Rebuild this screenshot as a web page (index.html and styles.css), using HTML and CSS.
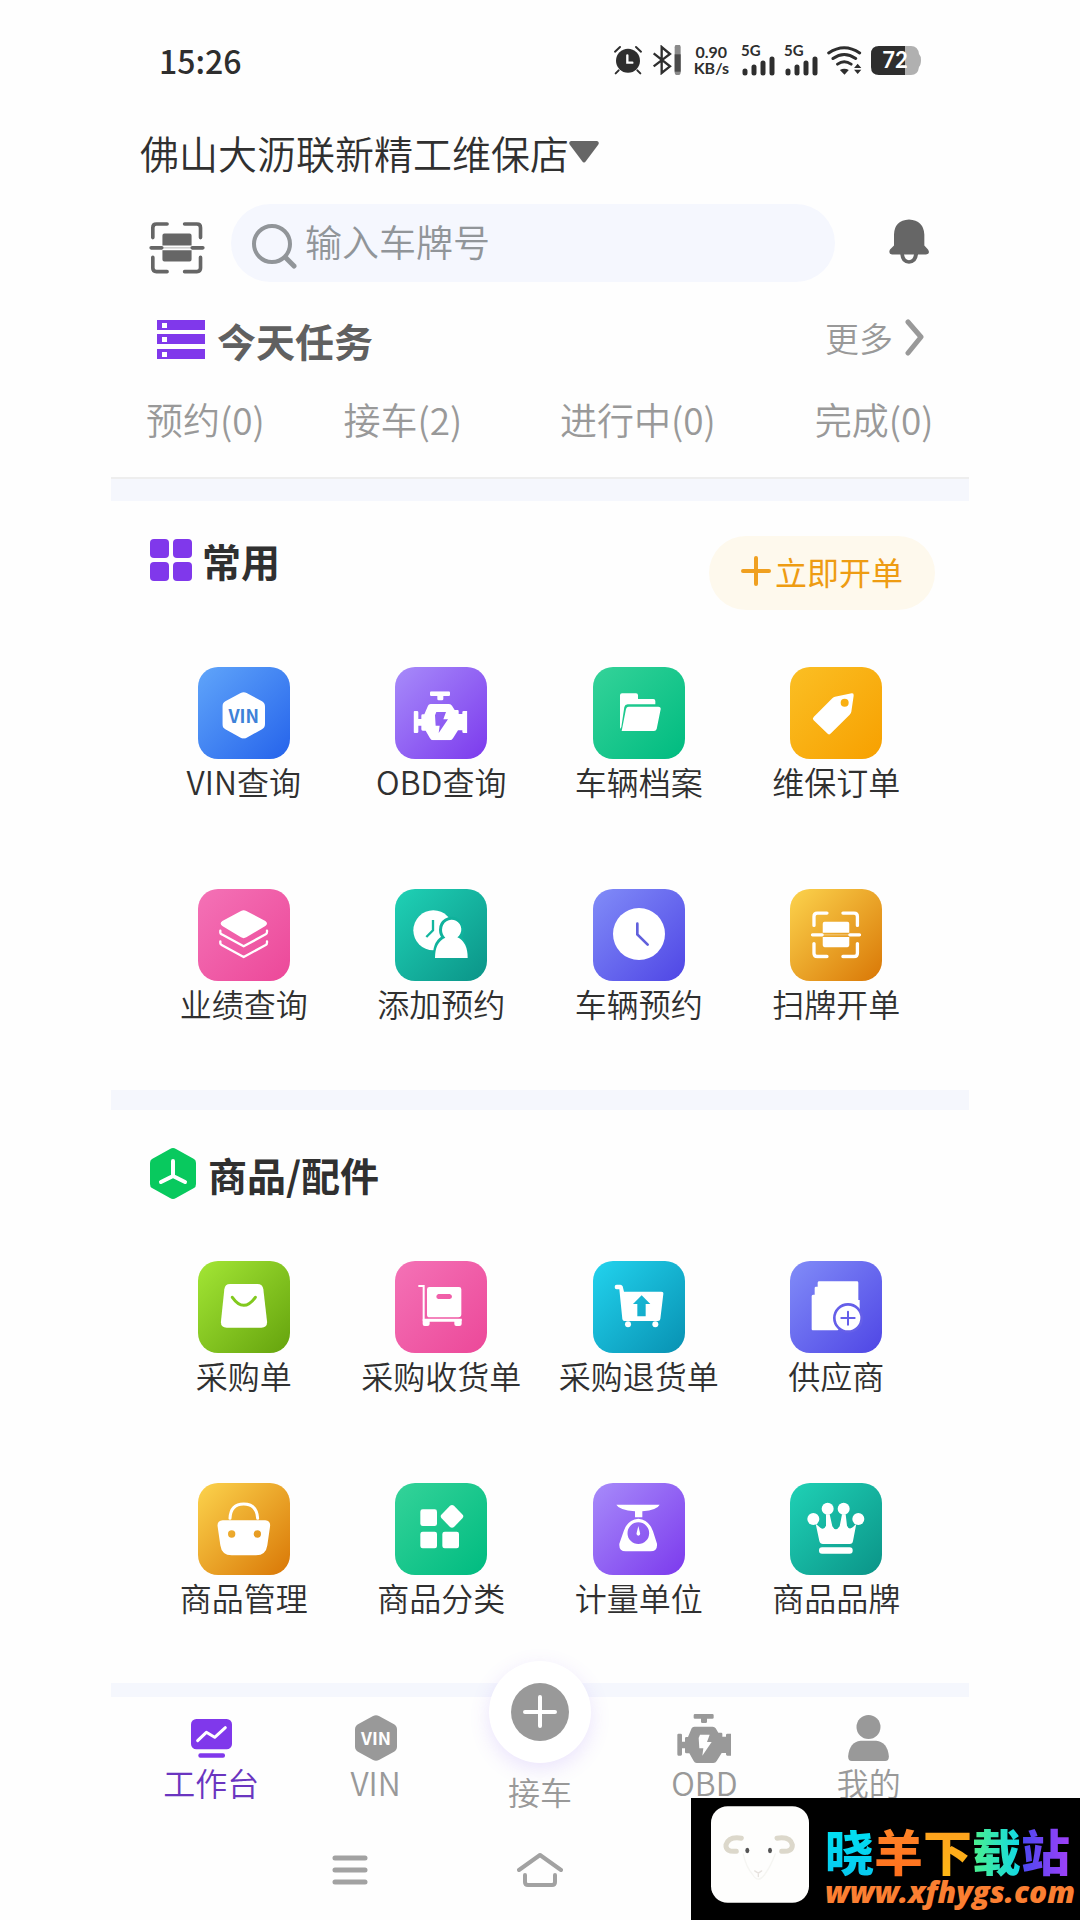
FILE: index.html
```html
<!DOCTYPE html>
<html lang="zh-CN">
<head>
<meta charset="utf-8">
<meta name="viewport" content="width=device-width, initial-scale=1">
<title>工作台</title>
<link rel="stylesheet" href="styles.css">
</head>
<body>
<svg class="defs" aria-hidden="true">
  <symbol id="scan" viewBox="0 0 168 160">
    <g fill="none" stroke="currentColor" stroke-width="11" stroke-linecap="round">
      <path d="M11 50V20Q11 9 22 9H54M107 9H144Q155 9 155 20V50M11 110V142Q11 153 22 153H54M107 153H144Q155 153 155 142V110M6 81H38M130 81H162"/>
    </g>
    <path fill="currentColor" d="M46 38H122Q128 38 128 44V74H40V44Q40 38 46 38ZM40 88H128V116Q128 122 122 122H46Q40 122 40 116Z"/>
    <path d="M38 81H130" stroke="currentColor" stroke-width="4" opacity=".35"/>
  </symbol>
  <symbol id="engine" viewBox="732 123 162 147">
    <path fill="currentColor" fill-rule="evenodd" d="M786 123H838Q842 123 842 127V134Q842 137 838 137H822V146Q822 150 818 150H808Q804 150 804 146V137H786Q782 137 782 134V127Q782 123 786 123ZM736 182H743Q747 182 747 186V206H756V196Q756 192 760 192H765L776 166Q778 161 784 161H839Q845 161 848 166L856 179H865Q868 179 868 183V191H879V186Q879 182 883 182H894V248H883Q879 248 879 244V240H866L851 264Q848 270 841 270H791Q785 270 782 264L769 241H760Q756 241 756 237V226H747V244Q747 248 743 248H736Q733 248 733 244V186Q733 182 736 182ZM801 185H830L822 207H836L808 248L811 226H799L797 195Z"/>
  </symbol>
  <symbol id="hex" viewBox="0 0 128 140">
    <path fill="currentColor" d="M55 3Q64 -2 73 3L119 28Q128 33 128 44V96Q128 107 119 112L73 137Q64 142 55 137L9 112Q0 107 0 96V44Q0 33 9 28Z"/>
  </symbol>
</svg>

<div class="app">
  <header class="status">
    <time class="status-time">15:26</time>
    <div class="status-icons">
      <svg width="30" height="30" viewBox="76 46 84 90" fill="none" stroke="#2e2e2e" stroke-width="6" stroke-linecap="round"><circle cx="118" cy="93" r="36" fill="#2e2e2e" stroke="none"/><path d="M79 66L94 52M157 66L142 52M90 122L81 131M146 122L155 131"/><path d="M116 77V99H131" stroke="#fff" stroke-width="7"/></svg>
      <svg width="30" height="30" viewBox="186 46 88 90" fill="none" stroke="#2e2e2e" stroke-width="7"><path d="M190 71L239 110L214 130V52L239 73L190 110"/><path d="M262 53V128" stroke="#8a8a8a" stroke-width="18" stroke-linecap="round"/><path d="M262 74V126" stroke="#4a4a4a" stroke-width="18"/></svg>
      <div class="speed"><span>0.90</span><span>KB/s</span></div>
      <div class="signal"><span>5G</span><svg width="34" height="20" viewBox="0 0 34 20" stroke="#2e2e2e" stroke-width="5" stroke-linecap="round"><path d="M4 15V17M13 11V17M22 7V17M31 3V17"/></svg></div>
      <div class="signal"><span>5G</span><svg width="34" height="20" viewBox="0 0 34 20" stroke="#2e2e2e" stroke-width="5" stroke-linecap="round"><path d="M4 15V17M13 11V17M22 7V17M31 3V17"/></svg></div>
      <svg width="35" height="29" viewBox="713 48 106 88" fill="none" stroke="#2e2e2e" stroke-width="9" stroke-linecap="round"><path d="M718 69Q765 37 812 69M731 86Q765 62 800 86M745 103Q765 89 786 103"/><path fill="#2e2e2e" stroke="none" d="M752 121Q765 113 779 121L766 135ZM795 115L806 102L817 115ZM795 120H817L806 133Z"/></svg>
      <svg class="battery" width="50" height="29" viewBox="0 0 50 29"><path fill="#b0b0b0" d="M7 0H40Q47 0 48 8Q50 10 50 14Q50 19 48 21Q47 29 40 29H7Z"/><path fill="#2e2e2e" d="M8 0H34V29H8Q0 29 0 21V8Q0 0 8 0Z"/><text x="24" y="22" text-anchor="middle">72</text></svg>
    </div>
  </header>

  <main>
    <h1 class="shop"><button type="button">佛山大沥联新精工维保店<svg width="30" height="22" viewBox="0 0 30 22"><path fill="#666" d="M2 0H28Q31 1 29 4L17 20Q15 23 13 20L1 4Q-1 1 2 0Z"/></svg></button></h1>

    <div class="search-row">
      <button class="scan" type="button" aria-label="扫描车牌"><svg width="56" height="53"><use href="#scan"/></svg></button>
      <label class="search">
        <svg width="46" height="46" viewBox="0 0 46 46" fill="none" stroke="#919599" stroke-width="4" stroke-linecap="round"><circle cx="21" cy="21" r="18"/><path d="M35 35L43 43" stroke-width="5"/></svg>
        <input type="text" placeholder="输入车牌号" aria-label="输入车牌号">
      </label>
      <button class="bell" type="button" aria-label="通知"><svg width="40" height="45" viewBox="206 26 120 134"><path fill="#666" d="M266 27Q310 30 312 72V105L323 117Q331 130 317 132H293Q290 159 266 160Q242 159 240 132H215Q203 130 209 117L221 105V72Q222 30 266 27ZM251 132Q254 149 266 149Q278 149 281 132Z"/></svg></button>
    </div>

    <section>
      <div class="task-head">
        <h2><svg width="48" height="39" viewBox="0 0 48 39"><path fill="#8038eb" fill-rule="evenodd" d="M0 0H48V10H0ZM5 3V8H10V3ZM0 14H48V24H0ZM5 17V22H10V17ZM0 29H48V39H0ZM5 32V37H10V32Z"/></svg>今天任务</h2>
        <a class="more" href="#tasks">更多<svg width="19" height="37" viewBox="0 0 19 37" fill="none" stroke="#999" stroke-width="5" stroke-linecap="round" stroke-linejoin="round"><path d="M3 3L16 18L3 34"/></svg></a>
      </div>
      <div class="task-tabs" id="tasks">
        <button type="button">预约(0)</button>
        <button type="button">接车(2)</button>
        <button type="button">进行中(0)</button>
        <button type="button">完成(0)</button>
      </div>
    </section>

    <div class="band band-lined"></div>

    <section class="common">
      <div class="section-head">
        <h2><svg width="42" height="42" viewBox="0 0 42 42" fill="#8038eb"><rect width="19" height="19" rx="4"/><rect x="23" width="19" height="19" rx="4"/><rect y="23" width="19" height="19" rx="4"/><rect x="23" y="23" width="19" height="19" rx="4"/></svg>常用</h2>
        <button class="order" type="button"><svg width="30" height="30" viewBox="0 0 30 30" stroke="#f0a020" stroke-width="4" stroke-linecap="round"><path d="M15 2V28M2 15H28"/></svg>立即开单</button>
      </div>
      <div class="grid">
        <a href="#vin"><svg class="tile blue" viewBox="84 50 276 276"><use href="#hex" x="157" y="125" width="128" height="140"/><text x="221" y="217" text-anchor="middle">VIN</text></svg>VIN查询</a>
        <a href="#obd"><svg class="tile violet" viewBox="677 50 276 276"><use href="#engine" x="732" y="123" width="162" height="147"/></svg>OBD查询</a>
        <a href="#files"><svg class="tile emerald" viewBox="98 50 276 276"><path fill="currentColor" d="M185 129H227Q233 129 233 135V146H279Q285 146 285 152V162H202Q194 162 192 170L183 230L179 236V135Q179 129 185 129ZM205 169H294Q302 169 301 177L289 236Q287 242 281 242H184L197 176Q199 169 205 169Z"/></svg>车辆档案</a>
        <a href="#orders"><svg class="tile amber" viewBox="691 50 276 276"><path fill="currentColor" fill-rule="evenodd" d="M826 139L876 129Q883 128 882 136L875 184Q874 189 870 193L814 249Q809 255 804 250L762 210Q757 205 762 200L818 144Q822 140 826 139ZM855 145A12 12 0 1 0 855 169A12 12 0 1 0 855 145Z"/></svg>维保订单</a>
        <a href="#performance"><svg class="tile pink" viewBox="84 716 276 276"><path fill="currentColor" d="M213 782Q221 777 229 782L286 812Q296 819 286 827L229 861Q221 866 213 861L157 827Q147 819 157 812Z"/><path fill="none" stroke="currentColor" stroke-width="7" stroke-linecap="round" stroke-linejoin="round" d="M151 841V847Q151 850 155 852L221 888L287 852Q292 849 291 841M151 873V879Q151 882 155 884L221 920L287 884Q292 881 291 873"/></svg>业绩查询</a>
        <a href="#add-booking"><svg class="tile teal" viewBox="677 716 276 276"><circle cx="792" cy="840" r="60" fill="currentColor"/><path d="M791 809V840L771 860" fill="none" stroke="#12b69f" stroke-width="7"/><path stroke="#10b29c" stroke-width="18" fill="#10b29c" d="M818 838A29 29 0 1 1 864 861Q884 870 886 914H800Q800 875 828 862Q818 852 818 838Z"/><path fill="currentColor" d="M818 838A29 29 0 1 1 864 861Q895 875 895 923H797Q797 875 828 862Q818 852 818 838Z"/></svg>添加预约</a>
        <a href="#bookings"><svg class="tile indigo" viewBox="98 716 276 276"><circle cx="236" cy="851" r="78" fill="currentColor"/><path d="M231 820V852L262 883" fill="none" stroke="#6160dc" stroke-width="8" stroke-linecap="round"/></svg>车辆预约</a>
        <a href="#scan-order"><svg class="tile yellow" viewBox="691 716 276 276"><use href="#scan" x="753" y="780" width="152" height="145"/></svg>扫牌开单</a>
      </div>
    </section>

    <div class="band"></div>

    <section class="goods">
      <div class="section-head">
        <h2><svg width="46" height="51" viewBox="0 0 46 51"><path fill="#08c95e" d="M20 1Q23 -1 26 1L44 11Q46 12 46 15V36Q46 39 44 40L26 50Q23 52 20 50L2 40Q0 39 0 36V15Q0 12 2 11Z"/><path d="M23 13V28L11 34M23 28L35 34" fill="none" stroke="#fff" stroke-width="4" stroke-linecap="round"/></svg>商品/配件</h2>
      </div>
      <div class="grid">
        <a href="#purchase"><svg class="tile lime" viewBox="84 36 276 276"><path fill="currentColor" d="M180 105H262Q278 105 280 121L291 216Q293 236 274 236H170Q151 236 153 216L163 121Q165 105 180 105Z"/><path d="M187 145Q221 193 256 145" fill="none" stroke="#82c91e" stroke-width="9" stroke-linecap="round"/></svg>采购单</a>
        <a href="#receive"><svg class="tile pink" viewBox="677 36 276 276"><path d="M747 111H763V212H877" fill="none" stroke="currentColor" stroke-width="6"/><path fill="currentColor" fill-rule="evenodd" d="M780 114H869Q876 114 876 121V196Q876 205 867 205H781Q773 205 773 197V121Q773 114 780 114ZM807 135Q801 137 801 143Q801 149 807 150H841Q848 149 848 143Q848 137 841 135ZM760 211H877V225Q877 231 870 231H861Q855 231 855 225V218H781V225Q781 231 774 231H766Q760 231 760 225Z"/></svg>采购收货单</a>
        <a href="#return"><svg class="tile cyan" viewBox="98 36 276 276"><path fill="currentColor" fill-rule="evenodd" d="M169 107H180Q185 107 187 112L191 128H303Q310 128 309 135L300 210Q299 216 293 216H192Q187 216 186 210L177 121H169Q163 121 163 114Q163 107 169 107ZM244 139L218 165H231V202H256V165H270Z"/><circle cx="203" cy="226" r="9" fill="currentColor"/><circle cx="285" cy="226" r="9" fill="currentColor"/></svg>采购退货单</a>
        <a href="#supplier"><svg class="tile indigo" viewBox="691 36 276 276"><path fill="currentColor" d="M779 97H892Q896 97 896 101V153H900V180L834 244H759Q756 244 756 240V142Q756 137 760 137H765V117Q765 113 769 113H774V101Q774 97 779 97Z"/><circle cx="865" cy="207" r="41" fill="currentColor" stroke="#655fe9" stroke-width="8"/><path d="M865 188V227M845 207H885" stroke="#655fe9" stroke-width="6" stroke-linecap="round"/></svg>供应商</a>
        <a href="#goods"><svg class="tile yellow" viewBox="84 700 276 276"><path d="M180 806Q182 763 221 763Q260 763 263 806" fill="none" stroke="currentColor" stroke-width="9" stroke-linecap="round"/><path fill="currentColor" fill-rule="evenodd" d="M158 812H286Q303 814 300 831L292 887Q288 917 258 917H185Q155 917 151 887L143 831Q140 814 158 812ZM185 842A11 11 0 1 0 185 864A11 11 0 1 0 185 842ZM262 842A11 11 0 1 0 262 864A11 11 0 1 0 262 842Z"/></svg>商品管理</a>
        <a href="#category"><svg class="tile emerald" viewBox="677 700 276 276" fill="currentColor"><rect x="753" y="779" width="50" height="50" rx="7"/><rect x="753" y="846" width="50" height="50" rx="7"/><rect x="819" y="846" width="50" height="50" rx="7"/><path d="M842 768Q848 764 854 768L880 795Q884 800 880 805L854 832Q848 836 842 832L816 805Q812 800 816 795Z"/></svg>商品分类</a>
        <a href="#units"><svg class="tile violet" viewBox="98 700 276 276"><path fill="currentColor" fill-rule="evenodd" d="M168 765H298Q291 781 246 785V803H224V785Q176 781 168 765ZM234 807Q267 811 278 845L290 882Q292 905 270 905H196Q175 905 177 882L190 845Q200 811 234 807ZM234 818A32 32 0 1 0 234 883A32 32 0 1 0 234 818ZM234 829L239 849Q241 857 234 858Q227 857 229 849Z"/></svg>计量单位</a>
        <a href="#brands"><svg class="tile teal" viewBox="691 700 276 276"><path fill="currentColor" d="M768 822L782 834Q793 842 799 828V794H810L818 830Q828 848 840 830L847 794H858L862 828Q868 842 880 832L890 822L880 874Q879 883 870 883H790Q781 883 779 874Z"/><g fill="currentColor"><circle cx="761" cy="808" r="18"/><circle cx="804" cy="777" r="18"/><circle cx="852" cy="777" r="18"/><circle cx="896" cy="808" r="18"/><rect x="778" y="893" width="101" height="19" rx="9"/></g></svg>商品品牌</a>
      </div>
    </section>

    <div class="band band-thin"></div>
  </main>

  <nav class="tabbar">
    <a class="active" href="#home"><span class="tab-icon"><svg width="41" height="39" viewBox="240 209 123 117"><rect x="240" y="209" width="123" height="91" rx="16" fill="#8038eb"/><rect x="262" y="312" width="80" height="13" rx="6" fill="#8038eb"/><path d="M260 274L286 249L311 264L343 235" fill="none" stroke="#fff" stroke-width="9" stroke-linecap="round" stroke-linejoin="round"/></svg></span>工作台</a>
    <a href="#vin"><span class="tab-icon"><svg width="42" height="46" viewBox="0 0 128 140"><use href="#hex" width="128" height="140"/><text class="vin-on" x="64" y="91" text-anchor="middle">VIN</text></svg></span>VIN</a>
    <a class="receive" href="#receive-car"><span class="plus"><svg width="58" height="58" viewBox="0 0 58 58"><circle cx="29" cy="29" r="29" fill="#999"/><path d="M29 14V43M14 29H44" stroke="#fff" stroke-width="4" stroke-linecap="round"/></svg></span>接车</a>
    <a href="#obd"><span class="tab-icon"><svg width="54" height="49"><use href="#engine"/></svg></span>OBD</a>
    <a href="#me"><span class="tab-icon"><svg width="41" height="46" viewBox="779 195 122 138" fill="currentColor"><circle cx="840" cy="231" r="36"/><path d="M816 272H863Q897 276 901 318Q902 333 890 333H790Q778 333 779 318Q783 276 816 272Z"/></svg></span>我的</a>
  </nav>

  <footer class="sysnav">
    <button type="button" aria-label="最近任务"><svg width="36" height="30" viewBox="0 0 36 30" stroke="#a2a2a2" stroke-width="5" stroke-linecap="round"><path d="M3 3H33M3 15H33M3 27H33"/></svg></button>
    <button type="button" aria-label="主屏幕"><svg width="46" height="36" viewBox="0 0 46 36" fill="none" stroke="#a2a2a2" stroke-width="4" stroke-linecap="round" stroke-linejoin="round"><path d="M2 18L23 3L44 18M8 23V30Q8 33 11 33H35Q38 33 38 30V23"/></svg></button>
  </footer>
</div>

<aside class="stamp">
  <svg class="sheep" width="98" height="97" viewBox="362 467 294 290"><rect x="362" y="467" width="294" height="290" rx="50" fill="#fefefd"/><g fill="none" stroke-linecap="round"><path d="M453 563Q415 557 407 583Q405 605 438 602M560 563Q600 557 606 583Q607 605 574 602" stroke="#dcd8cb" stroke-width="15"/><path d="M459 610Q467 650 487 672Q503 700 523 672Q540 650 555 610" stroke="#f5f5f2" stroke-width="4"/><path d="M493 661L504 668L514 661M504 668V678" stroke="#e6e2de" stroke-width="4"/></g><ellipse cx="471" cy="600" rx="6" ry="8" fill="#555"/><ellipse cx="539" cy="600" rx="6" ry="8" fill="#555"/></svg>
  <div class="stamp-text">
    <strong><span class="c1">晓</span><span class="c2">羊</span><span class="c3">下</span><span class="c4">载</span><span class="c5">站</span></strong>
    <em>www.xfhygs.com</em>
  </div>
</aside>
</body>
</html>
```
FILE: styles.css
```css
* { box-sizing: border-box; }

body {
  margin: 0;
  background: #fefefe;
  color: #303030;
  font-family: "Noto Sans CJK SC", sans-serif;
  font-weight: 350;
}

h1, h2 { margin: 0; }
svg { flex: none; display: block; }
a { color: inherit; text-decoration: none; }

button {
  padding: 0;
  border: 0;
  background: none;
  color: inherit;
  font: inherit;
}

.defs { position: absolute; width: 0; height: 0; }

.app {
  max-width: 858px;
  margin: 0 auto;
}

/* Status bar */
.status {
  display: flex;
  align-items: center;
  justify-content: space-between;
  height: 120px;
  padding: 0 48px;
  color: #2e2e2e;
}
.status-time { font-size: 32px; font-weight: 500; }
.status-icons { display: flex; align-items: center; gap: 9px; }
.speed {
  display: flex;
  flex-direction: column;
  align-items: center;
  margin: 0 3px;
  font: 700 16px/16px Lato, sans-serif;
}
.signal {
  display: flex;
  flex-direction: column;
  font: 700 15px/12px Lato, sans-serif;
}
.battery text { fill: #fff; font: 700 22px Lato, sans-serif; }

/* Shop and search */
.shop {
  padding: 0 29px;
  font-size: 39px;
  font-weight: 350;
  line-height: 64px;
}
.shop button { display: flex; align-items: center; }
.search-row {
  display: flex;
  align-items: center;
  gap: 26px;
  margin-top: 20px;
  padding: 0 40px 0 38px;
}
.scan { padding-top: 8px; color: #666; }
.search {
  flex: 1;
  display: flex;
  align-items: center;
  gap: 8px;
  height: 78px;
  margin-right: 28px;
  padding: 6px 20px 0;
  border-radius: 39px;
  background: #f5f7fe;
}
.search input {
  flex: 1;
  min-width: 0;
  height: 60px;
  padding: 0 0 10px;
  border: 0;
  outline: 0;
  background: none;
  font: 350 37px/50px "Noto Sans CJK SC", sans-serif;
}
.search input::placeholder { color: #919599; opacity: 1; }
.bell { padding-bottom: 4px; }

/* Today's tasks */
.task-head {
  display: flex;
  align-items: center;
  justify-content: space-between;
  height: 115px;
  padding: 0 45px 0 46px;
}
h2 {
  display: flex;
  align-items: center;
  gap: 12px;
  font-size: 39px;
  font-weight: 700;
  line-height: 50px;
}
.task-head h2 { color: #606060; }
.more {
  display: flex;
  align-items: center;
  gap: 12px;
  padding-bottom: 4px;
  color: #999;
  font-size: 34px;
  line-height: 44px;
}
.task-tabs {
  display: grid;
  grid-template-columns: 197fr 216fr 254fr 119fr;
  padding: 0 35px;
  color: #999;
  font-size: 37px;
  line-height: 44px;
}
.task-tabs button { text-align: left; white-space: nowrap; }

.band { height: 20px; background: #f5f7fd; }
.band-lined {
  height: 24px;
  margin-top: 36px;
  border-top: 2px solid #eee;
}
.band-thin { height: 14px; }

/* Sections */
.section-head {
  display: flex;
  align-items: flex-start;
  justify-content: space-between;
  padding: 0 34px 0 39px;
}
.common { padding: 35px 0 65px; }
.common h2 { gap: 10px; line-height: 48px; }
.goods { padding: 38px 0 64px; }
.order {
  display: flex;
  align-items: center;
  justify-content: center;
  gap: 4px;
  width: 226px;
  height: 74px;
  padding-bottom: 4px;
  border-radius: 37px;
  background: #fef9ed;
  color: #ee9c12;
  font-size: 32px;
  font-weight: 400;
}
.grid {
  display: grid;
  grid-template-columns: repeat(4, 1fr);
  row-gap: 86px;
  margin-top: 57px;
  padding: 0 34px;
}
.goods .grid { margin-top: 62px; }
.grid a {
  display: flex;
  flex-direction: column;
  align-items: center;
  font-size: 32px;
  line-height: 44px;
  white-space: nowrap;
}
.tile {
  width: 92px;
  height: 92px;
  border-radius: 20px;
  color: #fff;
}
.tile text { fill: #3e82d8; font-size: 54px; font-weight: 700; }
.blue { background: linear-gradient(135deg, #60a5fa, #2563eb); }
.violet { background: linear-gradient(135deg, #a78bfa, #7c3aed); }
.emerald { background: linear-gradient(135deg, #34d399, #00bb80); }
.amber { background: linear-gradient(135deg, #fbbf24, #f7a000); }
.pink { background: linear-gradient(135deg, #f472b6, #ec4899); }
.teal { background: linear-gradient(135deg, #1fd1b5, #0b9488); }
.indigo { background: linear-gradient(135deg, #818cf8, #4f46e5); }
.yellow { background: linear-gradient(135deg, #fcd34d, #d97706); }
.lime { background: linear-gradient(135deg, #a3e635, #65a30d); }
.cyan { background: linear-gradient(135deg, #22d3ee, #0891b2); }

/* Bottom tabs */
.tabbar {
  display: grid;
  grid-template-columns: repeat(5, 1fr);
  height: 118px;
  padding: 16px 18px 0;
  color: #999;
  font-size: 32px;
  line-height: 38px;
}
.tabbar a {
  display: flex;
  flex-direction: column;
  align-items: center;
}
.tabbar .active { color: #6a35c0; }
.tab-icon { display: grid; place-items: center; height: 50px; }
.vin-on { fill: #fff; font-size: 54px; font-weight: 700; }
.tabbar .receive { gap: 9px; margin-top: -52px; }
.plus {
  display: grid;
  flex: none;
  place-items: center;
  width: 102px;
  height: 102px;
  border-radius: 50%;
  background: #fff;
  box-shadow: 0 6px 20px rgba(128, 90, 240, 0.16);
}

/* System navigation */
.sysnav {
  display: grid;
  grid-template-columns: repeat(3, 190px);
  justify-content: center;
  padding: 36px 0 31px;
}
.sysnav button { display: grid; place-items: center; height: 38px; }

/* Site stamp over the page corner */
.stamp {
  position: fixed;
  right: 0;
  bottom: 0;
  display: flex;
  gap: 16px;
  width: 389px;
  height: 122px;
  padding: 8px 0 0 20px;
  background: #000;
}
.stamp-text { display: flex; flex-direction: column; padding-top: 14px; }
.stamp strong { font-size: 49px; font-weight: 900; line-height: 60px; white-space: nowrap; }
.stamp em {
  color: #fb7f32;
  font: italic 800 30px/24px "Open Sans", sans-serif;
}
.stamp span { background-clip: text; color: transparent; }
.c1 { background-image: linear-gradient(#00e8f4, #08c4ee); }
.c2 { background-image: linear-gradient(#ff8a2a, #ff6c1c); }
.c3 { background-image: linear-gradient(#ff9a20, #fdbb14); }
.c4 { background-image: linear-gradient(90deg, #4df08c, #10d8e8); }
.c5 { background-image: linear-gradient(90deg, #4a48f0, #a040f8); }
```
